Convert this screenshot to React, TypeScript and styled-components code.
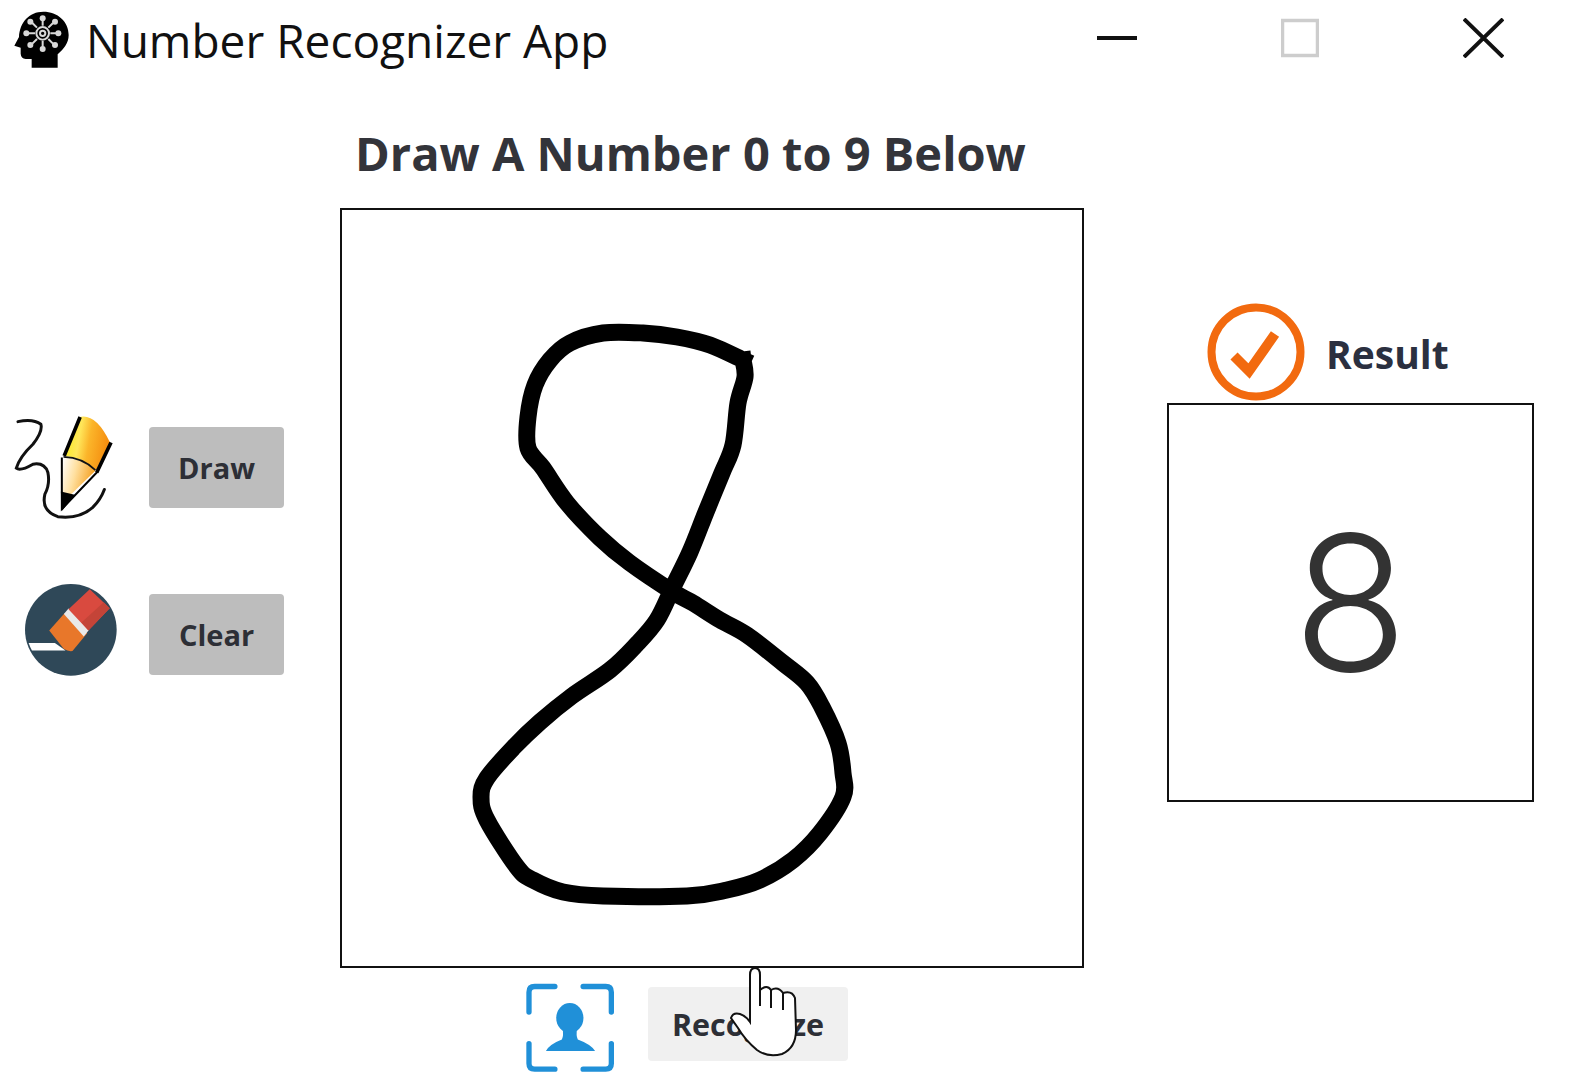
import React from 'react';
import styled, { createGlobalStyle } from 'styled-components';

const GlobalStyle = createGlobalStyle`
  html, body {
    margin: 0;
    padding: 0;
    background: #fff;
  }
  body {
    font-family: "Open Sans", "Noto Sans", sans-serif;
  }
`;

const Window = styled.div`
  width: 1570px;
  height: 1086px;
  overflow: hidden;
  background: #fff;
`;

const TitleBar = styled.header`
  height: 80px;
  display: flex;
  align-items: center;
  padding-right: 66px;
  padding-left: 5px;
`;

const TitleText = styled.h1`
  margin: 0 0 0 6px;
  font-family: "Open Sans", sans-serif;
  font-size: 46px;
  font-weight: 400;
  color: #111;
  white-space: nowrap;
`;

const WindowControls = styled.div`
  margin-left: auto;
  display: flex;
  align-items: center;
  gap: 144px;
  margin-top: -4px;
`;

const Main = styled.main`
  display: grid;
  grid-template-columns: 340px 744px 1fr;
`;

const ToolColumn = styled.aside`
  display: flex;
  flex-direction: column;
  gap: 86px;
  padding-top: 347px;
`;

const ToolRow = styled.div`
  height: 81px;
  display: flex;
  align-items: center;
`;

const ToolIconSlot = styled.div<{ $inset: number; $lift: number }>`
  width: 149px;
  box-sizing: border-box;
  padding-left: ${(p) => p.$inset}px;
  margin-bottom: ${(p) => p.$lift}px;
  display: flex;
  align-items: center;
`;

const ActionButton = styled.button<{ $tone: 'grey' | 'light'; $wide?: boolean }>`
  width: ${(p) => (p.$wide ? 200 : 135)}px;
  height: ${(p) => (p.$wide ? 74 : 81)}px;
  padding: 0;
  border: 0;
  border-radius: 4px;
  background: ${(p) => (p.$tone === 'grey' ? '#bdbdbd' : '#f0f0f0')};
  color: #2d2f36;
  font-family: "Open Sans", sans-serif;
  font-size: ${(p) => (p.$wide ? 30.5 : 29)}px;
  font-weight: 700;
`;

const CenterColumn = styled.section`
  display: flex;
  flex-direction: column;
`;

const Heading = styled.h2`
  height: 128px;
  box-sizing: border-box;
  margin: 0;
  padding: 18px 0 0 15px;
  display: flex;
  align-items: center;
  font-family: "Open Sans", sans-serif;
  font-size: 47px;
  font-weight: 700;
  color: #33343a;
  white-space: nowrap;
`;

const DrawingCanvas = styled.div`
  width: 744px;
  height: 760px;
  box-sizing: border-box;
  border: 2px solid #111;
  overflow: hidden;
`;

const CanvasArt = styled.svg`
  display: block;
  width: 740px;
  height: 756px;
`;

const RecognizeRow = styled.div`
  position: relative;
  margin-left: 186px;
  padding-top: 15px;
  display: flex;
  align-items: flex-start;
  gap: 33px;
`;

const RecognizeSlot = styled.div`
  padding-top: 4px;
`;

const HandCursor = styled.svg`
  position: absolute;
  left: 199px;
  top: -8px;
  width: 80px;
  height: 105px;
`;

const ResultColumn = styled.section`
  padding: 222px 0 0 83px;
`;

const ResultHeader = styled.div`
  height: 98px;
  margin-bottom: 3px;
  padding-left: 40px;
  display: flex;
  align-items: center;
  gap: 21px;
`;

const CheckSlot = styled.div`
  height: 98px;
  padding-top: 1px;
`;

const ResultLabel = styled.span`
  padding-top: 4px;
  font-family: "Open Sans", sans-serif;
  font-size: 39px;
  font-weight: 700;
  color: #2b3040;
`;

const ResultBox = styled.div`
  width: 367px;
  height: 399px;
  box-sizing: border-box;
  border: 2px solid #111;
  display: flex;
  align-items: center;
  justify-content: center;
`;

const ResultDigit = styled.span`
  font-family: Inter, "Open Sans", sans-serif;
  font-size: 188px;
  font-weight: 350;
  line-height: 1;
  color: #333;
`;

const strokePoints: [number, number][] = [
  [743, 360], [710, 345], [677, 337], [643, 333], [603, 333], [570, 343], [550, 360], [535, 385],
  [528, 417], [528, 448], [543, 468], [567, 503], [600, 538], [630, 563], [673, 592], [693, 603],
  [720, 620], [747, 635], [783, 663], [807, 683], [822, 707], [838, 743], [843, 773], [843, 797],
  [820, 833], [793, 860], [760, 880], [727, 890], [687, 896], [603, 896], [563, 892], [533, 880],
  [517, 867], [487, 820], [481, 797], [487, 778], [513, 748], [540, 722], [572, 696], [610, 670],
  [636, 645], [657, 620], [673, 587], [690, 552], [706, 512], [722, 473], [733, 445], [738, 403],
  [745, 377], [743, 360],
];

// smooth the hand drawn stroke a little
const smoothPath = (pts: [number, number][]) => {
  let d = `M${pts[0][0]} ${pts[0][1]}`;
  for (let i = 0; i < pts.length - 1; i++) {
    const a = pts[Math.max(i - 1, 0)];
    const b = pts[i];
    const c = pts[i + 1];
    const e = pts[Math.min(i + 2, pts.length - 1)];
    const c1x = b[0] + (c[0] - a[0]) / 6;
    const c1y = b[1] + (c[1] - a[1]) / 6;
    const c2x = c[0] - (e[0] - b[0]) / 6;
    const c2y = c[1] - (e[1] - b[1]) / 6;
    d += ` C${c1x} ${c1y} ${c2x} ${c2y} ${c[0]} ${c[1]}`;
  }
  return d;
};

const BrainHeadIcon = () => (
  <svg width="75" height="70" viewBox="0 0 225 210">
    <path
      d="M115 20 C158 20 191 50 191 90 C191 114 176 132 158 148 V188 H80 V162 H62 Q48 160 47 146 V128 L28 122 L42 96 C44 53 72 20 115 20 Z"
      fill="#000"
    />
    <g stroke="#d8d8d8" strokeWidth="6" fill="none">
      <circle cx="113" cy="85" r="19" />
      <circle cx="113" cy="85" r="8" />
      <path d="M113 62 V46 M113 108 V125 M90 85 H72 M136 85 H154 M96 68 L82 54 M130 68 L144 54 M96 102 L82 116 M130 102 L144 116" />
    </g>
    <g fill="#d8d8d8">
      <circle cx="113" cy="40" r="9" />
      <circle cx="113" cy="132" r="9" />
      <circle cx="64" cy="85" r="9" />
      <circle cx="160" cy="85" r="9" />
      <circle cx="76" cy="50" r="9" />
      <circle cx="150" cy="50" r="9" />
      <circle cx="76" cy="120" r="9" />
      <circle cx="150" cy="120" r="9" />
    </g>
  </svg>
);

const MinimizeIcon = () => (
  <svg width="40" height="40" viewBox="0 0 40 40">
    <path d="M0 20 H40" stroke="#111" strokeWidth="4" />
  </svg>
);

const MaximizeIcon = () => (
  <svg width="38" height="40" viewBox="0 0 38 40">
    <rect x="1.5" y="2.5" width="35" height="35" fill="none" stroke="#cdcdcd" strokeWidth="3.5" />
  </svg>
);

const CloseIcon = () => (
  <svg width="41" height="40" viewBox="0 0 41 40">
    <path d="M1 1 L40 39 M40 1 L1 39" stroke="#111" strokeWidth="4" />
  </svg>
);

const PencilIcon = () => (
  <svg width="103" height="107" viewBox="40 40 310 320">
    <defs>
      <linearGradient id="pencilBody" x1="0" y1="0" x2="1" y2="0.2">
        <stop offset="0" stopColor="#f5ee10" />
        <stop offset="0.4" stopColor="#ffe65a" />
        <stop offset="0.62" stopColor="#fbb52a" />
        <stop offset="1" stopColor="#f58f10" />
      </linearGradient>
      <linearGradient id="pencilWood" x1="0" y1="0" x2="1" y2="0.3">
        <stop offset="0" stopColor="#fff" />
        <stop offset="0.45" stopColor="#ffe0a0" />
        <stop offset="1" stopColor="#f5a020" />
      </linearGradient>
    </defs>
    <path
      d="M55 62 Q100 52 124 70 Q130 92 100 130 Q60 168 50 202 Q62 212 100 190 Q135 184 145 215 Q152 250 136 280 Q124 330 175 348 Q240 356 280 320 Q304 296 315 266"
      fill="none"
      stroke="#111"
      strokeWidth="9"
      strokeLinecap="round"
    />
    <path d="M240 48 Q290 36 332 125 L290 208 Q250 170 192 165 Z" fill="url(#pencilBody)" />
    <path d="M192 172 Q250 172 288 210 L205 290 L188 282 Z" fill="url(#pencilWood)" />
    <path d="M242 48 L194 165 M335 125 L292 215" stroke="#000" strokeWidth="11" fill="none" />
    <path d="M192 168 Q250 170 288 208" stroke="#111" strokeWidth="5" fill="none" />
    <path d="M187 170 V325 L295 212" stroke="#000" strokeWidth="6" fill="none" />
    <path d="M184 272 L226 282 L188 330 Z" fill="#000" />
  </svg>
);

const EraserIcon = () => (
  <svg width="92" height="92" viewBox="75 552 277 277">
    <circle cx="213" cy="690" r="138" fill="#2f4858" />
    <path d="M86 730 H165 L197 752 H96 Q90 742 86 730 Z" fill="#fff" />
    <path d="M148 692 L194 640 L262 700 L218 754 Q205 756 192 748 Z" fill="#e8772a" />
    <path d="M192 642 L206 626 L268 690 L252 710 Z" fill="#e9e9e9" />
    <path d="M206 628 L270 568 L330 625 L266 692 Z" fill="#d94a3f" />
    <path d="M245 668 L312 607 L330 625 L266 692 Z" fill="#c44438" />
  </svg>
);

const FaceScanIcon = () => (
  <svg width="89" height="90" viewBox="78 98 268 270" style={{ display: 'block' }}>
    <path
      d="M87 185 V125 Q87 108 104 108 H165 M250 108 H318 Q335 108 335 125 V185 M87 280 V340 Q87 357 104 357 H165 M250 357 H318 Q335 357 335 340 V280"
      fill="none"
      stroke="#2090d8"
      strokeWidth="16"
      strokeLinecap="round"
    />
    <ellipse cx="210" cy="203" rx="41" ry="45" fill="#2090d8" />
    <path d="M138 302 Q150 282 186 268 Q192 255 188 232 H232 Q228 255 234 268 Q272 282 286 302 Z" fill="#2090d8" />
  </svg>
);

const ResultCheckIcon = () => (
  <svg width="98" height="98" viewBox="0 0 98 98">
    <circle cx="49" cy="49" r="44.5" fill="none" stroke="#f26a0f" strokeWidth="8" />
    <path d="M27 53 L42 68 L68 31" fill="none" stroke="#f26a0f" strokeWidth="10" />
  </svg>
);

const App: React.FC = () => {
  return (
    <Window>
      <GlobalStyle />
      <TitleBar>
        <BrainHeadIcon />
        <TitleText>Number Recognizer App</TitleText>
        <WindowControls>
          <MinimizeIcon />
          <MaximizeIcon />
          <CloseIcon />
        </WindowControls>
      </TitleBar>

      <Main>
        <ToolColumn>
          <ToolRow>
            <ToolIconSlot $inset={13} $lift={0}>
              <PencilIcon />
            </ToolIconSlot>
            <ActionButton $tone="grey">Draw</ActionButton>
          </ToolRow>
          <ToolRow>
            <ToolIconSlot $inset={25} $lift={9}>
              <EraserIcon />
            </ToolIconSlot>
            <ActionButton $tone="grey">Clear</ActionButton>
          </ToolRow>
        </ToolColumn>

        <CenterColumn>
          <Heading>Draw A Number 0 to 9 Below</Heading>
          <DrawingCanvas>
            <CanvasArt viewBox="342 210 740 756">
              <path
                d={smoothPath(strokePoints)}
                fill="none"
                stroke="#000"
                strokeWidth="17"
                strokeLinejoin="round"
                strokeLinecap="square"
              />
            </CanvasArt>
          </DrawingCanvas>
          <RecognizeRow>
            <FaceScanIcon />
            <RecognizeSlot>
              <ActionButton $tone="light" $wide>
                Recognize
              </ActionButton>
            </RecognizeSlot>
            <HandCursor viewBox="725 960 80 105">
              <path
                d="M750 1022 V975 Q750 968 755 968 Q760 968 760 975 V990 Q767 984 771 990 Q778 986 783 993 Q792 990 795 998 L796 1030 Q796 1048 782 1054 Q768 1058 757 1050 Q745 1040 738 1028 L731 1018 Q733 1012 740 1014 Q746 1016 750 1022 Z"
                fill="#fff"
                stroke="#111"
                strokeWidth="2"
              />
              <path d="M760 990 V1006 M771 990 V1008 M783 993 V1010" fill="none" stroke="#111" strokeWidth="2" />
            </HandCursor>
          </RecognizeRow>
        </CenterColumn>

        <ResultColumn>
          <ResultHeader>
            <CheckSlot>
              <ResultCheckIcon />
            </CheckSlot>
            <ResultLabel>Result</ResultLabel>
          </ResultHeader>
          <ResultBox>
            <ResultDigit>8</ResultDigit>
          </ResultBox>
        </ResultColumn>
      </Main>
    </Window>
  );
};

export default App;
